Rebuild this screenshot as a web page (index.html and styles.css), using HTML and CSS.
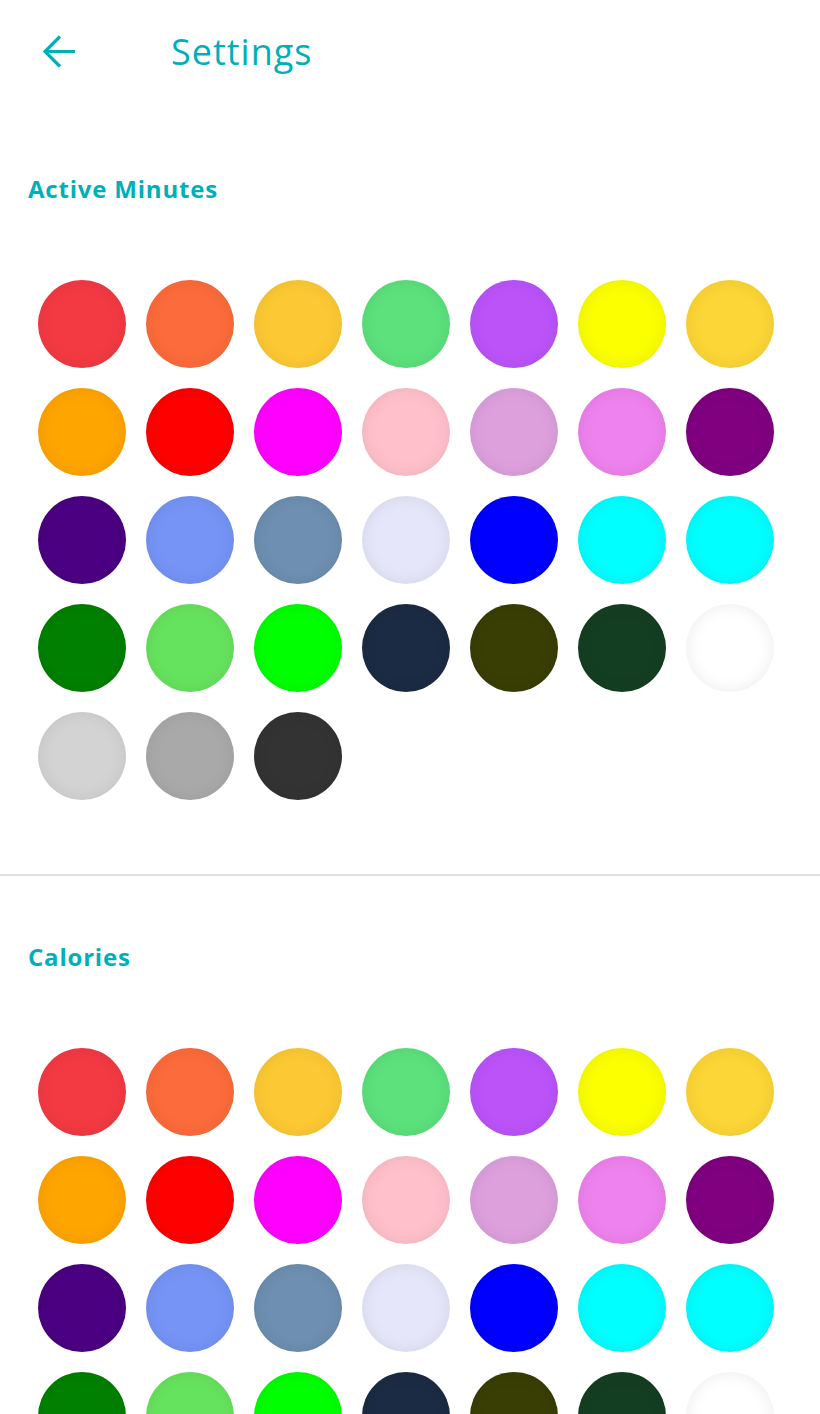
FILE: index.html
```html
<!DOCTYPE html>
<html lang="en">
<head>
<meta charset="utf-8">
<title>Settings</title>
<link rel="stylesheet" href="styles.css">
</head>
<body>
<header class="topbar">
  <svg class="back" width="34" height="36" viewBox="0 0 34 36" aria-label="Back">
    <path d="M2 17.5 H32 M17 2.5 L2 17.5 L17 32.5" fill="none" stroke="#00b0b9" stroke-width="3.2" stroke-linecap="butt" stroke-linejoin="miter"/>
  </svg>
  <h1 class="title">Settings</h1>
</header>

<section class="section">
  <h2 class="label">Active Minutes</h2>
  <div class="swatches">
    <span class="dot" style="background:#f33a43"></span>
    <span class="dot" style="background:#fc6b3b"></span>
    <span class="dot" style="background:#fcc934"></span>
    <span class="dot" style="background:#5ce17c"></span>
    <span class="dot" style="background:#bb53f9"></span>
    <span class="dot" style="background:#fbff00"></span>
    <span class="dot" style="background:#fcd636"></span>
    <span class="dot" style="background:#ffa500"></span>
    <span class="dot" style="background:#ff0000"></span>
    <span class="dot" style="background:#ff00ff"></span>
    <span class="dot" style="background:#ffc0cb"></span>
    <span class="dot" style="background:#dda0dd"></span>
    <span class="dot" style="background:#ee82ee"></span>
    <span class="dot" style="background:#800080"></span>
    <span class="dot" style="background:#4b0082"></span>
    <span class="dot" style="background:#7594f5"></span>
    <span class="dot" style="background:#6e8fb1"></span>
    <span class="dot" style="background:#e6e6fa"></span>
    <span class="dot" style="background:#0000ff"></span>
    <span class="dot" style="background:#00ffff"></span>
    <span class="dot" style="background:#00ffff"></span>
    <span class="dot" style="background:#008000"></span>
    <span class="dot" style="background:#66e35e"></span>
    <span class="dot" style="background:#00ff00"></span>
    <span class="dot" style="background:#1b2b43"></span>
    <span class="dot" style="background:#393e05"></span>
    <span class="dot" style="background:#143e22"></span>
    <span class="dot" style="background:#ffffff"></span>
    <span class="dot" style="background:#d3d3d3"></span>
    <span class="dot" style="background:#a9a9a9"></span>
    <span class="dot" style="background:#333333"></span>
  </div>
</section>

<hr class="divider">

<section class="section">
  <h2 class="label">Calories</h2>
  <div class="swatches">
    <span class="dot" style="background:#f33a43"></span>
    <span class="dot" style="background:#fc6b3b"></span>
    <span class="dot" style="background:#fcc934"></span>
    <span class="dot" style="background:#5ce17c"></span>
    <span class="dot" style="background:#bb53f9"></span>
    <span class="dot" style="background:#fbff00"></span>
    <span class="dot" style="background:#fcd636"></span>
    <span class="dot" style="background:#ffa500"></span>
    <span class="dot" style="background:#ff0000"></span>
    <span class="dot" style="background:#ff00ff"></span>
    <span class="dot" style="background:#ffc0cb"></span>
    <span class="dot" style="background:#dda0dd"></span>
    <span class="dot" style="background:#ee82ee"></span>
    <span class="dot" style="background:#800080"></span>
    <span class="dot" style="background:#4b0082"></span>
    <span class="dot" style="background:#7594f5"></span>
    <span class="dot" style="background:#6e8fb1"></span>
    <span class="dot" style="background:#e6e6fa"></span>
    <span class="dot" style="background:#0000ff"></span>
    <span class="dot" style="background:#00ffff"></span>
    <span class="dot" style="background:#00ffff"></span>
    <span class="dot" style="background:#008000"></span>
    <span class="dot" style="background:#66e35e"></span>
    <span class="dot" style="background:#00ff00"></span>
    <span class="dot" style="background:#1b2b43"></span>
    <span class="dot" style="background:#393e05"></span>
    <span class="dot" style="background:#143e22"></span>
    <span class="dot" style="background:#ffffff"></span>
    <span class="dot" style="background:#d3d3d3"></span>
    <span class="dot" style="background:#a9a9a9"></span>
    <span class="dot" style="background:#333333"></span>
  </div>
</section>
</body>
</html>
```
FILE: styles.css
```css
html, body {
  margin: 0;
  padding: 0;
  background: #ffffff;
}

body {
  font-family: "Open Sans", Lato, "Liberation Sans", sans-serif;
  color: #00b0b9;
  overflow: hidden;
}

.topbar {
  box-sizing: border-box;
  height: 108px;
  padding: 0 0 4px 43px;
  display: flex;
  align-items: center;
}

.back {
  display: block;
  flex: none;
}

.title {
  margin: 0 0 0 94px;
  font-size: 36px;
  font-weight: 400;
  line-height: 40px;
  letter-spacing: 1px;
  color: #00b0b9;
}

.section {
  padding: 66px 0 74px 0;
}

.label {
  margin: 0 0 0 28px;
  font-size: 24px;
  font-weight: 700;
  line-height: 30px;
  letter-spacing: 0.8px;
  color: #00b0b9;
}

.swatches {
  margin: 76px 0 0 38px;
  display: grid;
  grid-template-columns: repeat(7, 88px);
  grid-auto-rows: 88px;
  gap: 20px;
}

.dot {
  display: block;
  width: 88px;
  height: 88px;
  border-radius: 50%;
  box-shadow: inset 0 0 16px rgba(0, 0, 0, 0.08);
}

.divider {
  margin: 0;
  border: 0;
  border-top: 2px solid #e0e0e0;
  height: 0;
}
```
